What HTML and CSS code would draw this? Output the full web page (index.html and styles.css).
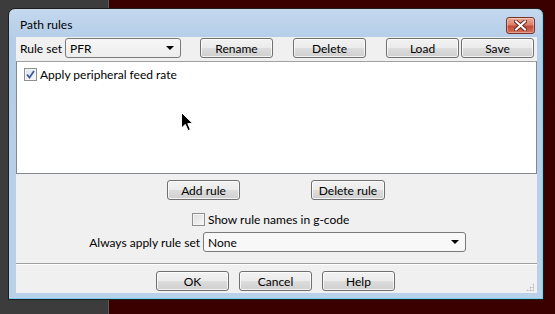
FILE: index.html
```html
<!DOCTYPE html>
<html>
<head>
  <meta charset="UTF-8">
  <meta name="viewport" content="width=device-width, initial-scale=1.0">
  <title>Path rules</title>
  <link rel="stylesheet" href="styles.css">
</head>
<body>
  <div class="window">
    <div class="titlebar">
      <span class="title">Path rules</span>
      <button class="close" type="button" aria-label="Close">
        <svg width="13" height="11" viewBox="0 0 13 11">
          <path d="M2 1.5 L11 9.5 M11 1.5 L2 9.5" stroke="#6b2a22" stroke-width="4" stroke-linecap="square"/>
          <path d="M2 1.5 L11 9.5 M11 1.5 L2 9.5" stroke="#ffffff" stroke-width="2" stroke-linecap="square"/>
        </svg>
      </button>
    </div>

    <div class="client">
      <div class="top-row">
        <span class="label label-set">Rule set</span>
        <div class="combo combo-set"><span>PFR</span><i class="arrow"></i></div>
        <button class="btn btn-rename" type="button">Rename</button>
        <button class="btn btn-delete" type="button">Delete</button>
        <button class="btn btn-load" type="button">Load</button>
        <button class="btn" type="button">Save</button>
      </div>

      <div class="rule-list">
        <label class="check">
          <span class="box checked">
            <svg width="9" height="9" viewBox="0 0 9 9"><path d="M1 4.5 L3.5 7.5 L8 1" fill="none" stroke="#3c5a9a" stroke-width="1.8"/></svg>
          </span>
          Apply peripheral feed rate
        </label>
      </div>

      <div class="rule-buttons">
        <button class="btn" type="button">Add rule</button>
        <button class="btn btn-wide" type="button">Delete rule</button>
      </div>

      <div class="names-row">
        <label class="check">
          <span class="box"></span>
          Show rule names in g-code
        </label>
      </div>

      <div class="always-row">
        <span class="label">Always apply rule set</span>
        <div class="combo combo-always"><span>None</span><i class="arrow"></i></div>
      </div>

      <div class="separator"></div>

      <div class="dialog-buttons">
        <button class="btn" type="button">OK</button>
        <button class="btn" type="button">Cancel</button>
        <button class="btn" type="button">Help</button>
      </div>

      <div class="grip"></div>
    </div>
  </div>

  <svg class="cursor" width="13" height="20" viewBox="0 0 13 20">
    <path d="M0.5 0.5 L0.5 16 L4.3 12.4 L7 18.6 L9.4 17.6 L6.8 11.6 L11.8 11.6 Z" fill="#000" stroke="#fff" stroke-width="1"/>
  </svg>
</body>
</html>
```

FILE: styles.css
```css
body {
  margin: 0;
  padding: 8px 0 0 8px;
  height: 314px;
  box-sizing: border-box;
  overflow: hidden;
  font-family: Lato, "Segoe UI", sans-serif;
  font-size: 12px;
  color: #000;
  background: linear-gradient(to right, #3c3c3c 0, #3c3c3c 108px, #5a5a5a 108px, #5a5a5a 109px, #3a0000 109px);
}
.window {
  width: 536px;
  height: 292px;
  box-sizing: border-box;
  border: 1px solid #1e1e1e;
  border-radius: 7px 7px 0 0;
  background: linear-gradient(#c4d8ee, #b4cde8 30px, #bad1ea);
  padding: 0 6px 6px 7px;
  box-shadow: inset -1px -1px 0 #7ad0f0;
  display: flex;
  flex-direction: column;
}
.titlebar {
  height: 28px;
  display: flex;
  align-items: center;
  justify-content: space-between;
  flex-shrink: 0;
}
.title {
  padding-left: 4px;
  padding-top: 3px;
}
.close {
  width: 29px;
  height: 17px;
  margin-top: 5px;
  margin-right: 2px;
  padding: 0;
  border: 1px solid #7a3328;
  border-radius: 3px;
  background: linear-gradient(#eaa895, #d9826d 45%, #c34a36 55%, #d3735c);
  box-shadow: inset 0 0 0 1px rgba(255, 255, 255, 0.35);
  display: flex;
  align-items: center;
  justify-content: center;
}
.client {
  position: relative;
  flex: 1;
  background: #f0f0f0;
  display: flex;
  flex-direction: column;
}
.label {
  white-space: nowrap;
}
.top-row {
  display: flex;
  align-items: center;
  height: 20px;
  margin-top: 1px;
  padding-left: 4px;
}
.label-set {
  width: 45px;
  flex-shrink: 0;
}
.btn {
  font-family: inherit;
  font-size: 12px;
  color: #000;
  width: 73px;
  height: 20px;
  padding: 0;
  border: 1px solid #707070;
  border-radius: 3px;
  background: linear-gradient(#f2f2f2, #ebebeb 50%, #dddddd 50%, #cfcfcf);
  box-shadow: inset 0 0 0 1px rgba(255, 255, 255, 0.75);
}
.btn-wide {
  width: 74px;
}
.combo {
  height: 20px;
  box-sizing: border-box;
  border: 1px solid #7a7a7a;
  border-radius: 3px;
  background: linear-gradient(#f7f7f7, #ededed);
  display: flex;
  align-items: center;
  justify-content: space-between;
  padding: 0 6px 0 4px;
}
.combo-set {
  width: 116px;
}
.combo-always {
  width: 263px;
  background: #f8f8f8;
}
.arrow {
  width: 0;
  height: 0;
  border-left: 4px solid transparent;
  border-right: 4px solid transparent;
  border-top: 4px solid #000;
}
.btn-rename {
  margin-left: 19px;
}
.btn-delete {
  margin-left: 20px;
}
.btn-load {
  margin-left: 20px;
  margin-right: 2px;
}
.rule-list {
  margin-top: 3px;
  height: 113px;
  box-sizing: border-box;
  border: 1px solid #828790;
  border-top-color: #a0a0a0;
  background: #fff;
  padding: 5px 0 0 7px;
}
.check {
  display: flex;
  align-items: center;
  gap: 3px;
  height: 14px;
}
.box {
  width: 13px;
  height: 13px;
  box-sizing: border-box;
  border: 1px solid #8e8f8f;
  background: linear-gradient(135deg, #dcdcdc, #f8f8f8);
  box-shadow: inset 0 0 0 1px #f4f4f4;
  display: flex;
  align-items: center;
  justify-content: center;
}
.box.checked {
  background: linear-gradient(135deg, #dbe3ee, #f7f9fc);
}
.rule-buttons {
  display: flex;
  justify-content: center;
  gap: 71px;
  margin-top: 6px;
  padding-right: 1px;
}
.names-row {
  padding-left: 176px;
  margin-top: 12px;
}
.always-row {
  display: flex;
  align-items: center;
  justify-content: flex-end;
  margin-top: 6px;
  padding-right: 71px;
  height: 20px;
}
.always-row .label {
  margin-right: 3px;
}
.separator {
  margin-top: 11px;
  height: 1px;
  background: #a0a0a0;
  border-bottom: 1px solid #fff;
}
.dialog-buttons {
  display: flex;
  justify-content: center;
  gap: 10px;
  margin-top: 6px;
  padding-right: 2px;
}
.grip {
  position: absolute;
  right: 3px;
  bottom: 2px;
  width: 8px;
  height: 8px;
  background:
    radial-gradient(circle, #b8b8b8 0.8px, transparent 1.2px) 0 0 / 3px 3px;
  clip-path: polygon(100% 0, 100% 100%, 0 100%);
}
.cursor {
  position: absolute;
  left: 181px;
  top: 112px;
}
```
